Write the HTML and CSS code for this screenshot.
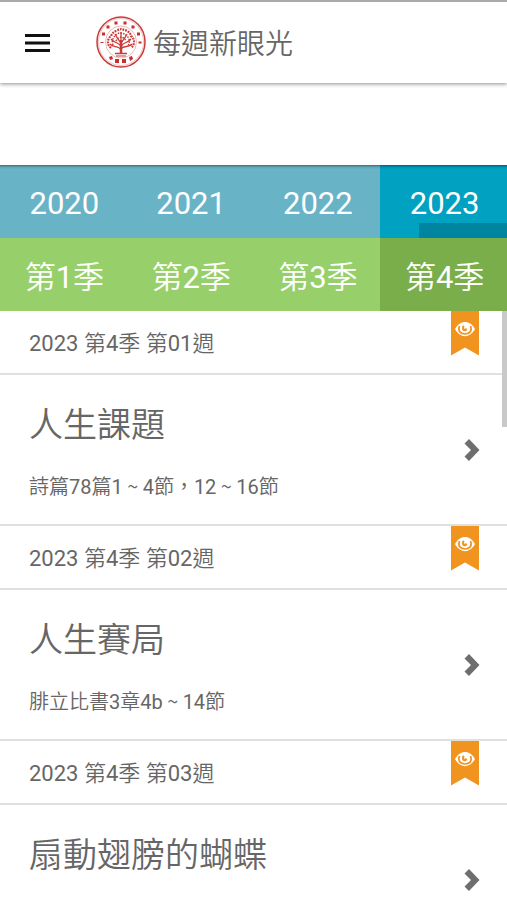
FILE: index.html
```html
<!DOCTYPE html>
<html lang="zh-Hant">
<head>
<meta charset="utf-8">
<meta name="viewport" content="width=device-width, initial-scale=1">
<title>每週新眼光</title>
<link rel="stylesheet" href="styles.css">
</head>
<body>
<svg class="defs" width="0" height="0" aria-hidden="true">
  <symbol id="ribbon" viewBox="0 0 28 45">
    <path fill="#f0931f" d="M0 0h28v44.500L14 36.500 0 44.500z"/>
    <path fill="#fff" d="M4 18C9 8.500 19 8.500 24 18C19 27.500 9 27.500 4 18z"/>
    <path fill="none" stroke="#f0931f" stroke-width="1.700" d="M8.500 15C6.500 20 9.500 23 14 23S21.500 20 19.500 15"/>
    <path fill="none" stroke="#f0931f" stroke-width="2.200" stroke-linecap="round" d="M12.300 15.500C11.500 18.500 13 20 15 18.500"/>
  </symbol>
  <symbol id="chevron" viewBox="0 0 16 22">
    <path fill="#6e6e6e" d="M5 0 15.500 11 5 22 .5 17.500 7 11 .5 4.500z"/>
  </symbol>
</svg>
<div class="app">
  <header class="bar">
    <button class="menu" type="button" aria-label="選單">
      <svg width="26" height="20" viewBox="0 0 26 20"><path fill="#111" d="M1 1h25v3H1zM1 8.500h25v3H1zM1 16h25v3H1z"/></svg>
    </button>
    <svg class="seal" width="50" height="52" viewBox="0 0 50 52" aria-hidden="true">
      <g fill="none" stroke="#cb3a38">
        <ellipse cx="25" cy="26" rx="24" ry="25" stroke-width="1.500"/>
        <ellipse cx="25" cy="26" rx="22.500" ry="23.500" stroke-width=".5" opacity=".6"/>
        <ellipse cx="25" cy="26" rx="15.500" ry="16" stroke-width=".6" opacity=".6"/>
        <path stroke-width="2.500" d="M25 37V24"/>
        <path stroke-width="1.300" d="M25 34C23 29 17 32 14 28M25 33C27 29 33 32 36 28M25 30C22 26 18 27 15 23M25 30C28 26 32 27 35 23M25 27C22 23 21 22 19 18M25 27C28 23 29 22 31 18M25 25V16M19 37.500h12"/>
        <path stroke-width="2.200" stroke-dasharray="1.800 1" d="M15 32C10 28 12 22 15 20C17 15 22 14 25 13C29 14 34 15 35 20C39 23 39 29 35 32"/>
        <path stroke-width="1.500" stroke-dasharray="1.500 1.200" d="M17 29C15 24 18 20 21 18C24 16 28 17 31 20C34 23 34 27 32 30M20 25C22 20 28 20 30 25"/>
        <path stroke-width="1" d="M20 40h10"/>
      </g>
      <path fill="#c52f2d" d="M18.500 5.500h3v3h-3zM27.500 5.500h3v3h-3zM10.500 9.500h3v3h-3zM35.500 9.500h3v3h-3zM6 16.500h3v3H6zM41 16.500h3v3h-3zM4.500 26h3v1h-3zM42.500 25.500h3v2h-3zM13 41l3-1 1 3-3 1zM19 43h4v4h-4zM26 43h4v4h-4zM33 41l3-1 1 3-3 2z"/>
    </svg>
    <h1 class="brand">每週新眼光</h1>
  </header>
  <div class="spacer"></div>
  <nav class="tabs years" aria-label="年份">
    <button type="button">2020</button>
    <button type="button">2021</button>
    <button type="button">2022</button>
    <button type="button" class="on" aria-current="true">2023</button>
    <span class="thumb-x"></span>
  </nav>
  <nav class="tabs quarters" aria-label="季">
    <button type="button">第1季</button>
    <button type="button">第2季</button>
    <button type="button">第3季</button>
    <button type="button" class="on" aria-current="true">第4季</button>
  </nav>
  <main class="list">
    <span class="thumb-y"></span>
    <article>
      <div class="week"><span>2023 第4季 第01週</span><svg class="ribbon"><use href="#ribbon"/></svg></div>
      <a class="lesson" href="#w01">
        <div><h2>人生課題</h2><p>詩篇78篇1<span class="to"> ~ </span>4節，12<span class="to"> ~ </span>16節</p></div>
        <svg class="chevron"><use href="#chevron"/></svg>
      </a>
    </article>
    <article>
      <div class="week"><span>2023 第4季 第02週</span><svg class="ribbon"><use href="#ribbon"/></svg></div>
      <a class="lesson" href="#w02">
        <div><h2>人生賽局</h2><p>腓立比書3章4b<span class="to"> ~ </span>14節</p></div>
        <svg class="chevron"><use href="#chevron"/></svg>
      </a>
    </article>
    <article>
      <div class="week"><span>2023 第4季 第03週</span><svg class="ribbon"><use href="#ribbon"/></svg></div>
      <a class="lesson" href="#w03">
        <div><h2>扇動翅膀的蝴蝶</h2></div>
        <svg class="chevron"><use href="#chevron"/></svg>
      </a>
    </article>
  </main>
</div>
</body>
</html>
```
FILE: styles.css
```css
* { box-sizing: border-box; }

body {
  margin: 0;
  background: #fff;
  color: #666;
  font-family: Roboto, "Noto Sans CJK TC DemiLight", "Noto Sans CJK TC", sans-serif;
  font-weight: 400;
}

h1, h2, p { margin: 0; font-weight: 350; }

button {
  margin: 0;
  padding: 0;
  border: 0;
  background: none;
  font: inherit;
  color: inherit;
}

.defs { position: absolute; }

.app {
  display: flex;
  flex-direction: column;
  height: 100vh;
  overflow: hidden;
}

.app > * { flex: none; }

.bar {
  display: flex;
  align-items: center;
  padding: 0 24px;
  height: 83px;
  border-top: 2px solid #a9a9a9;
  box-shadow: 0 1px 4px rgba(0, 0, 0, .45);
}

.menu { display: flex; }
.seal { margin: 0 7px 2px 46px; }

.brand {
  padding-top: 4px;
  font-size: 28px;
  line-height: 40px;
}

.spacer { height: 82px; }

.tabs {
  position: relative;
  display: grid;
  grid-template-columns: repeat(4, 1fr);
  height: 73px;
  color: #fff;
}

.tabs button { padding-left: 2px; }

.years {
  background: #69b3c7;
  font-size: 31px;
  box-shadow: inset 0 4px 3px -3px rgba(0, 0, 0, .5);
}

.years button { padding-top: 3px; }

.years .on {
  background: #00a1c1;
  box-shadow: inset 0 4px 3px -3px rgba(0, 0, 0, .5);
}

.quarters { background: #97d06a; font-size: 31px; }
.quarters .on { background: #79ae4b; }

.thumb-x {
  position: absolute;
  right: 0;
  bottom: 0;
  width: 88px;
  height: 15px;
  background: rgba(0, 0, 0, .17);
}

.list {
  position: relative;
  flex: 1 1 0;
  min-height: 0;
  overflow: hidden;
}

.thumb-y {
  position: absolute;
  top: 0;
  right: 0;
  width: 5px;
  height: 116px;
  background: #c9c9c9;
}

.week {
  display: flex;
  justify-content: space-between;
  align-items: flex-start;
  height: 64px;
  padding: 0 28px 0 29px;
  border-bottom: 2px solid #e0e0e0;
  font-size: 22px;
  line-height: 66px;
}

.ribbon { width: 28px; height: 45px; }

.lesson {
  display: flex;
  justify-content: space-between;
  align-items: center;
  height: 151px;
  padding: 0 27px 0 29px;
  border-bottom: 2px solid #e0e0e0;
  color: inherit;
  text-decoration: none;
}

.lesson div {
  align-self: flex-start;
  padding-top: 25px;
}

.lesson h2 {
  font-size: 34px;
  line-height: 50px;
}

.lesson p {
  margin-top: 21px;
  font-size: 20px;
  font-weight: 400;
  line-height: 30px;
}

.to { font-family: "Noto Sans CJK TC DemiLight", "Noto Sans CJK TC", sans-serif; }

.chevron { width: 16px; height: 22px; }
```
